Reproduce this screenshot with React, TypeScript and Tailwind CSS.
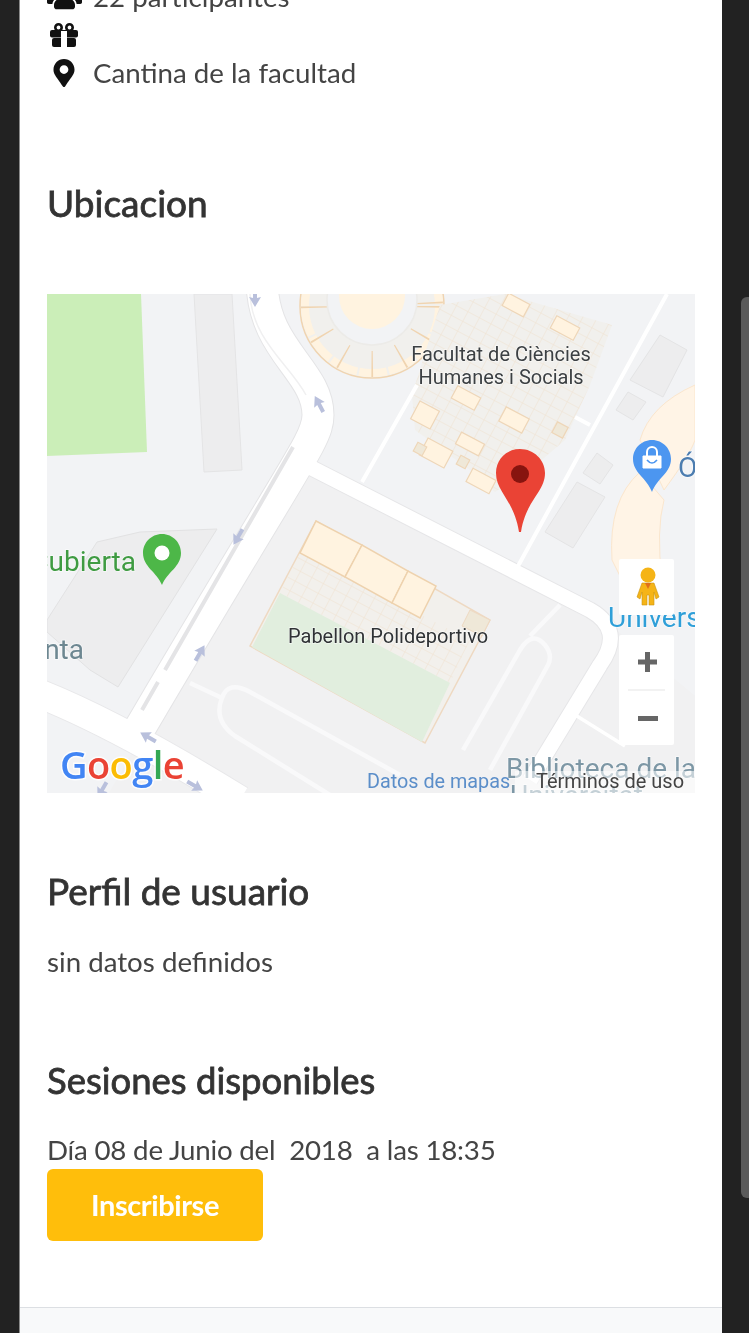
import React from 'react';
import { FaMapMarkerAlt, FaUsers } from 'react-icons/fa';

// roof tiles of the faculty: centre x, centre y, width, height, fill
const faculty: [number, number, number, number, string][] = [
  [516, 305, 24, 14, '#fff3e0'],
  [565, 328, 26, 14, '#fff3e0'],
  [466, 398, 26, 14, '#fff3e0'],
  [514, 420, 26, 16, '#fff3e0'],
  [425, 415, 22, 20, '#fff3e0'],
  [436, 453, 28, 19, '#fff3e0'],
  [470, 444, 26, 13, '#fff3e0'],
  [481, 481, 26, 15, '#fff3e0'],
  [420, 449, 10, 10, '#efe8d8'],
  [463, 462, 10, 10, '#efe8d8'],
  [560, 430, 12, 12, '#efe8d8'],
];

// one-way arrows: x, y, rotation
const arrows: [number, number, number][] = [
  [319, 404, -28],
  [255, 298, 180],
  [238, 537, 210],
  [200, 653, 30],
  [148, 737, -60],
  [195, 786, 120],
  [102, 790, 210],
];

function GiftIcon() {
  return (
    <svg viewBox="0 0 28 24" className="ml-[3px] h-6 w-7 text-[#111111]" fill="currentColor">
      <circle cx="8.5" cy="4.5" r="3.2" fill="none" stroke="currentColor" strokeWidth="2.6" />
      <circle cx="19.5" cy="4.5" r="3.2" fill="none" stroke="currentColor" strokeWidth="2.6" />
      <rect x="0" y="7" width="28" height="7.5" rx="2" />
      <rect x="2" y="15" width="24" height="9" rx="2" />
      <rect x="11" y="8" width="6" height="16" fill="#ffffff" />
    </svg>
  );
}

function MapCanvas() {
  return (
    <svg viewBox="47 294 648 499" className="block w-[648px] h-[499px] blur-[0.4px]">
      <defs>
        <pattern id="cells" width="13" height="11" patternUnits="userSpaceOnUse" patternTransform="rotate(28)">
          <path d="M0,0 H13 M0,0 V11" stroke="#efe1cf" strokeWidth="1" fill="none" />
        </pattern>
      </defs>
      <rect x="47" y="294" width="648" height="499" fill="#f2f3f5" />
      <polygon points="300,462 47,900 700,900 700,700 610,625" fill="#f1f1f2" />
      <polygon points="47,294 141,294 147,452 47,456" fill="#cbeeb8" />
      <polygon points="194,294 232,294 242,470 204,472" fill="#ededee" stroke="#e4e4e5" />
      <polygon points="97,542 140,532 217,529 118,687 90,670 47,632 47,620" fill="#ededee" stroke="#e2e2e3" />

      {/* arena */}
      <circle cx="372" cy="306" r="72" fill="#f1f0ed" stroke="#f0d4b0" strokeWidth="1.5" />
      <circle cx="372" cy="306" r="67" fill="none" stroke="#fff3e0" strokeWidth="8" strokeDasharray="28 2" />
      <circle cx="372" cy="306" r="58" fill="none" stroke="#f0d4b0" strokeWidth="26" strokeDasharray="1.5 28.5" />
      <circle cx="372" cy="300" r="45" fill="#f2f3f5" stroke="#ecebe8" strokeWidth="1.5" />
      <circle cx="372" cy="296" r="33" fill="#fff3e0" />

      {/* faculty */}
      <polygon points="440,305 505,294 612,325 590,385 565,440 530,470 495,492 470,470 415,430 412,395" fill="#f1f0ed" />
      <polygon points="440,305 505,294 612,325 590,385 565,440 530,470 495,492 470,470 415,430 412,395" fill="url(#cells)" />
      {faculty.map(([x, y, w, h, fill], i) => (
        <rect key={i} x={x - w / 2} y={y - h / 2} width={w} height={h} fill={fill} stroke="#eed6b8" strokeWidth="1.2" transform={`rotate(28 ${x} ${y})`} />
      ))}

      {/* curved shopping block */}
      <path d="M695,385 Q650,405 640,440 L664,490 Q690,455 695,440 Z" fill="#fff4e6" stroke="#fbe6cd" />
      <path d="M640,472 Q608,500 612,560 L622,580 L662,580 Q656,530 664,500 Z" fill="#fff4e6" stroke="#fbe6cd" />

      {/* grey blocks */}
      <polygon points="660,335 687,350 663,397 630,380" fill="#ededee" stroke="#e4e4e5" />
      <polygon points="628,392 646,402 633,420 616,410" fill="#ededee" stroke="#e4e4e5" />
      <polygon points="597,453 613,465 600,484 583,473" fill="#ededee" stroke="#e4e4e5" />
      <polygon points="577,482 605,497 573,548 545,532" fill="#ededee" stroke="#e4e4e5" />

      {/* roads */}
      <g fill="none" strokeLinecap="butt" strokeLinejoin="round">
        <path d="M262,280 C262,350 318,370 318,415 C318,440 300,455 130,745" stroke="#e4e4e6" strokeWidth="33" />
        <path d="M300,462 L590,610 Q625,630 600,665 L530,780" stroke="#e6e6e8" strokeWidth="17" />
        <path d="M30,690 Q110,720 240,800" stroke="#e8e8ea" strokeWidth="30" />
        <path d="M262,280 C262,350 318,370 318,415 C318,440 300,455 130,745" stroke="#ffffff" strokeWidth="31" />
        <path d="M300,462 L590,610 Q625,630 600,665 L530,780" stroke="#ffffff" strokeWidth="15" />
        <path d="M30,690 Q110,720 240,800" stroke="#ffffff" strokeWidth="28" />
        <path d="M293,447 L165,670 M158,682 L142,710" stroke="#e4e4e6" strokeWidth="4" />
        <path d="M250,294 C252,340 290,365 306,395" stroke="#f0f0f1" strokeWidth="1.5" />
        <path d="M362,482 L417,385 M667,294 L517,568" stroke="#ffffff" strokeWidth="4" />
        <path d="M575,417 L590,425" stroke="#ffffff" strokeWidth="4" />
        <path d="M613,650 L540,775 M572,713 L625,746" stroke="#ffffff" strokeWidth="3.5" />
        <path d="M190,683 L222,698 Q213,720 235,736 L330,795 M222,698 Q228,680 250,692 L400,775" stroke="#f9f9fa" strokeWidth="4.5" />
        <path d="M463,750 L520,650 Q532,630 545,645 Q553,655 548,665 L490,770 M530,636 L560,605" stroke="#f9f9fa" strokeWidth="4.5" />
      </g>
      {arrows.map(([x, y, r], i) => (
        <path key={i} d="M0,-9 L6,1 L2,0 L2,9 L-2,9 L-2,0 L-6,1 Z" fill="#b9c0dc" transform={`translate(${x} ${y}) rotate(${r})`} />
      ))}

      {/* sports hall */}
      <polygon points="316,521 250,646 425,743 490,620" fill="#f2f0ec" stroke="#eed9c2" strokeWidth="1.5" />
      <polygon points="300,553 280,593 450,683 470,640" fill="url(#cells)" />
      <polygon points="280,593 252,647 422,742 450,683" fill="#e1eede" />
      <polygon points="316,521 300,553 345,577 362,545" fill="#fff3e0" stroke="#eed2ae" strokeWidth="1.5" />
      <polygon points="362,545 345,577 392,603 408,571" fill="#fff3e0" stroke="#eed2ae" strokeWidth="1.5" />
      <polygon points="408,571 392,603 420,618 436,586" fill="#fff3e0" stroke="#eed2ae" strokeWidth="1.5" />
      <polygon points="470,610 490,620 482,636 462,626" fill="#efe8d8" stroke="#eed9c2" />

      {/* place names */}
      <g fontFamily="Roboto, sans-serif" style={{ paintOrder: 'stroke' }} stroke="#ffffff" strokeWidth="1.5" strokeOpacity="0.6">
        <text x="501" y="361" fontSize="20" textAnchor="middle" fill="#3c4043">Facultat de Ciències</text>
        <text x="501" y="384" fontSize="20" textAnchor="middle" fill="#3c4043">Humanes i Socials</text>
        <text x="288" y="643" fontSize="20" fill="#2f3235">Pabellon Polideportivo</text>
        <text x="136" y="571" fontSize="28" textAnchor="end" fill="#3f9b42">Cubierta</text>
        <text x="84" y="659" fontSize="28" textAnchor="end" fill="#6d8791">Planta</text>
        <text x="678" y="477" fontSize="28" fill="#4c7db0">Óptica</text>
        <text x="608" y="627" fontSize="28" fill="#2f9fd8">Universitat</text>
        <text x="506" y="778" fontSize="28" fill="#7d97a5">Biblioteca de la</text>
        <text x="510" y="805" fontSize="28" fill="#7d97a5">Universitat</text>
      </g>

      {/* red pin */}
      <path d="M520,449 C506,449 496,460 496,473 C496,492 514,500 519,532 L521,532 C526,500 545,492 545,473 C545,460 534,449 520,449 Z" fill="#ea4335" />
      <circle cx="520" cy="474" r="9" fill="#87140f" />

      {/* shop pin */}
      <path d="M652,440 C641,440 633,449 633,459 C633,473 647,478 652,492 C657,478 671,473 671,459 C671,449 663,440 652,440 Z" fill="#4c96f0" />
      <path d="M643,456 H661 V468 H643 Z" fill="#ffffff" stroke="#ffffff" strokeLinejoin="round" />
      <path d="M647,456 V452 A5,5 0 0 1 657,452 V456" fill="none" stroke="#ffffff" strokeWidth="2" />
      <path d="M647,460 Q652,466 657,460" fill="none" stroke="#4c96f0" strokeWidth="1.6" />

      {/* green pin */}
      <path d="M162,534 C151,534 143,543 143,553 C143,567 157,572 162,585 C167,572 181,567 181,553 C181,543 173,534 162,534 Z" fill="#4db748" />
      <circle cx="162" cy="553" r="7.5" fill="#ffffff" />

      {/* street view control */}
      <rect x="619" y="559" width="55" height="56" rx="2" fill="#ffffff" />
      <circle cx="648" cy="575" r="7.5" fill="#f5b417" />
      <path d="M642,583 H654 L659,597 L656,599 L654,592 V605 H649 V595 H647 V605 H642 V592 L640,599 L637,597 Z" fill="#f5b417" stroke="#c99412" strokeWidth="0.6" />
      <path d="M645,583 L648,589 L651,583 Z" fill="#e0701a" />

      {/* zoom control */}
      <rect x="619" y="635" width="55" height="110" rx="2" fill="#ffffff" />
      <rect x="628" y="689.5" width="37" height="1" fill="#e6e6e6" />
      <path d="M638,659.5 H645 V652 H650 V659.5 H657 V664.5 H650 V672 H645 V664.5 H638 Z" fill="#666666" />
      <rect x="638" y="716" width="20" height="5" fill="#666666" />

      {/* attribution */}
      <rect x="515" y="771" width="180" height="22" fill="#ffffff" fillOpacity="0.55" />
      <text x="367" y="788" fontFamily="Roboto, sans-serif" fontSize="19.8" fill="#5b8ec9">Datos de mapas</text>
      <text x="536" y="788" fontFamily="Roboto, sans-serif" fontSize="20" fill="#444444">Términos de uso</text>

      {/* logo */}
      <text x="60" y="779" fontFamily="'Open Sans', sans-serif" fontSize="38" fontWeight="600" letterSpacing="-0.6" stroke="#ffffff" strokeWidth="3" strokeOpacity="0.8" style={{ paintOrder: 'stroke' }}>
        <tspan fill="#4285f4">G</tspan>
        <tspan fill="#ea4335">o</tspan>
        <tspan fill="#fbbc05">o</tspan>
        <tspan fill="#4285f4">g</tspan>
        <tspan fill="#34a853">l</tspan>
        <tspan fill="#ea4335">e</tspan>
      </text>
    </svg>
  );
}

export default function App() {
  return (
    <div className="flex h-[1333px] overflow-hidden bg-[#222222] font-['Lato',sans-serif] text-[#444444] blur-[0.3px]">
      <div className="w-[19px] shrink-0" />
      <main className="flex w-[703px] shrink-0 flex-col bg-white border-l border-[#8a8a8a]">
        <div className="mt-[-22px] pl-[27px]">
          <div className="flex h-[38px] items-center text-[27.7px]">
            <FaUsers className="w-[35px] h-[28px] text-[#111111]" />
            <span className="ml-[11px]">22 participantes</span>
          </div>
          <div className="flex h-[38px] items-center">
            <GiftIcon />
          </div>
          <div className="flex h-[38px] items-center text-[27.7px]">
            <FaMapMarkerAlt className="ml-[6px] w-[22px] h-[28px] text-[#111111]" />
            <span className="ml-[18px]">Cantina de la facultad</span>
          </div>
        </div>

        <section className="mt-[92px] pl-[27px]">
          <h2 className="h-[38px] text-[37px] leading-[38px] text-[#333333] [-webkit-text-stroke:0.8px_#333333]">Ubicacion</h2>
          <div className="mt-[72px] w-[648px]">
            <MapCanvas />
          </div>
        </section>

        <section className="mt-[79px] pl-[27px]">
          <h2 className="h-[38px] text-[37px] leading-[38px] text-[#333333] [-webkit-text-stroke:0.8px_#333333]">Perfil de usuario</h2>
          <p className="mt-[33px] h-[38px] text-[27.7px] leading-[38px]">sin datos definidos</p>
        </section>

        <section className="mt-[80px] pl-[27px]">
          <h2 className="h-[38px] text-[36.5px] leading-[38px] text-[#333333] [-webkit-text-stroke:0.8px_#333333]">Sesiones disponibles</h2>
          <p className="mt-8 h-[38px] text-[27.7px] leading-[38px] tracking-[-0.2px] whitespace-pre">Día 08 de Junio del  2018  a las 18:35</p>
          <button className="flex h-[72px] w-[216px] items-center justify-center rounded-md bg-[#ffbe0b] text-[29px] font-bold tracking-[-0.4px] text-white">
            Inscribirse
          </button>
        </section>

        <div className="mt-[66px] flex-1 border-t border-[#dcdfe3] bg-[#f8f9fa]" />
      </main>
      <div className="w-[19px] shrink-0" />
      <div className="w-2 shrink-0 pt-[297px]">
        <div className="h-[901px] rounded-l-md bg-[#5a5a5a]" />
      </div>
    </div>
  );
}
